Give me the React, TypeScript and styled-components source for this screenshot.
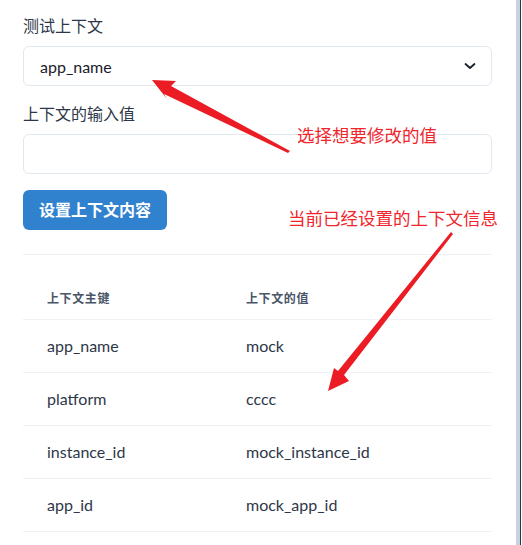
import React from "react";
import styled, { createGlobalStyle } from "styled-components";

const Global = createGlobalStyle`
  html, body { margin: 0; padding: 0; background: #ffffff; }
  body { font-family: Lato, "Noto Sans CJK SC", sans-serif; color: #1a202c; }
  * { box-sizing: border-box; }
`;

const Frame = styled.div`
  position: relative;
  display: flex;
  width: 522px;
  height: 545px;
  overflow: hidden;
`;

const Main = styled.div`
  width: 516px;
  padding: 14px 24px 0 23px;
  display: flex;
  flex-direction: column;
`;

const EdgeBar = styled.div`
  width: 5px;
  background: #c7d2dd;
  border-right: 1px solid #2d3748;
`;

const Field = styled.div`
  display: flex;
  flex-direction: column;
  margin-bottom: 16px;
`;

const Label = styled.label`
  font-size: 16px;
  line-height: 24px;
  font-weight: 400;
  color: #2d3748;
  margin-bottom: 8px;
`;

const SelectBox = styled.div`
  height: 40px;
  border: 1px solid #e2e8f0;
  border-radius: 6px;
  display: flex;
  align-items: center;
  justify-content: space-between;
  padding: 0 14px 0 16px;
  font-size: 16px;
  color: #1a202c;
`;

const InputBox = styled.div`
  height: 40px;
  border: 1px solid #e2e8f0;
  border-radius: 6px;
`;

const Button = styled.button`
  align-self: flex-start;
  height: 40px;
  padding: 0 16px;
  border: none;
  border-radius: 6px;
  background: #3182ce;
  color: #ffffff;
  font-family: Lato, "Noto Sans CJK SC", sans-serif;
  font-size: 16px;
  font-weight: 700;
  line-height: 1;
`;

const Divider = styled.hr`
  border: none;
  border-top: 1px solid #edf0f4;
  margin: 24px 0 24px;
`;

const Row = styled.div<{ $head?: boolean }>`
  display: grid;
  grid-template-columns: 199px 1fr;
  border-bottom: 1px solid #edf2f7;
  padding: ${(p) => (p.$head ? "12px 0" : "16px 0")};
  font-size: ${(p) => (p.$head ? "12px" : "16px")};
  line-height: ${(p) => (p.$head ? "16px" : "20px")};
  font-weight: ${(p) => (p.$head ? 700 : 400)};
  letter-spacing: ${(p) => (p.$head ? "0.05em" : "normal")};
  color: ${(p) => (p.$head ? "#4a5568" : "#2d3748")};
`;

const Cell = styled.div`
  padding: 0 24px;
`;

const Note = styled.div<{ $x: number; $y: number }>`
  position: absolute;
  left: ${(p) => p.$x}px;
  top: ${(p) => p.$y}px;
  font-family: "Noto Sans CJK SC", sans-serif;
  font-size: 17.5px;
  line-height: 22px;
  color: #f0262d;
  white-space: nowrap;
`;

const Overlay = styled.svg`
  position: absolute;
  left: 0;
  top: 0;
  pointer-events: none;
`;

const rows = [
  ["app_name", "mock"],
  ["platform", "cccc"],
  ["instance_id", "mock_instance_id"],
  ["app_id", "mock_app_id"],
];

export default function App() {
  return (
    <>
      <Global />
      <Frame>
        <Main>
          <Field>
            <Label>测试上下文</Label>
            <SelectBox>
              <span>app_name</span>
              <svg width="14" height="8" viewBox="0 0 14 8">
                <path d="M2.5 2 L7 6 L11.5 2" fill="none" stroke="#1a202c" strokeWidth="1.8" strokeLinecap="round" strokeLinejoin="round" />
              </svg>
            </SelectBox>
          </Field>
          <Field>
            <Label>上下文的输入值</Label>
            <InputBox />
          </Field>
          <Button>设置上下文内容</Button>
          <Divider />
          <Row $head>
            <Cell>上下文主键</Cell>
            <Cell>上下文的值</Cell>
          </Row>
          {rows.map(([k, v]) => (
            <Row key={k}>
              <Cell>{k}</Cell>
              <Cell>{v}</Cell>
            </Row>
          ))}
        </Main>
        <EdgeBar />
        <Overlay width="522" height="545" viewBox="0 0 522 545">
          <polygon points="152,80 176,81 171,86 290,151 288,153 164,94 167,99" fill="#ec1c24" />
          <polygon points="451,232 453,234 344,375 349,381 328,391 334,368 338,371" fill="#ec1c24" />
        </Overlay>
        <Note $x={297} $y={124}>选择想要修改的值</Note>
        <Note $x={288} $y={207}>当前已经设置的上下文信息</Note>
      </Frame>
    </>
  );
}
